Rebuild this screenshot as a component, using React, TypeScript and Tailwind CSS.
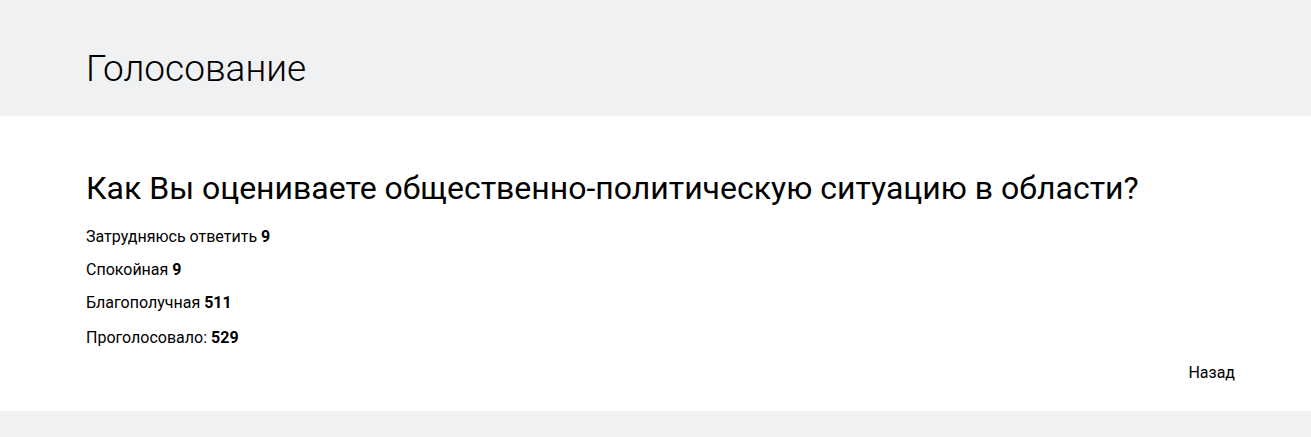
export default function App() {
  return (
    <div className="min-h-[437px] bg-[#f0f1f3]" style={{ fontFamily: "Roboto, 'Noto Sans', sans-serif" }}>
      <div className="h-[116px] bg-[#f0f1f3] px-[86px] pt-[45px]">
        <h1 className="text-[37px] font-light leading-[48px] text-black">Голосование</h1>
      </div>
      <div className="h-[295px] bg-white px-[86px] pt-[50px]">
        <h2 className="text-[32px] leading-[44px] text-black">Как Вы оцениваете общественно-политическую ситуацию в области?</h2>
        <div className="mt-[16px] flex flex-col gap-[11px] text-[16px] leading-[22px] text-black">
          <p>Затрудняюсь ответить <b>9</b></p>
          <p>Спокойная <b>9</b></p>
          <p>Благополучная <b>511</b></p>
          <p className="mt-[2px]">Проголосовало: <b>529</b></p>
        </div>
        <div className="mt-[13px] flex justify-end">
          <a className="mr-[-10px] text-[16px] leading-[22px] text-black">Назад</a>
        </div>
      </div>
    </div>
  );
}
